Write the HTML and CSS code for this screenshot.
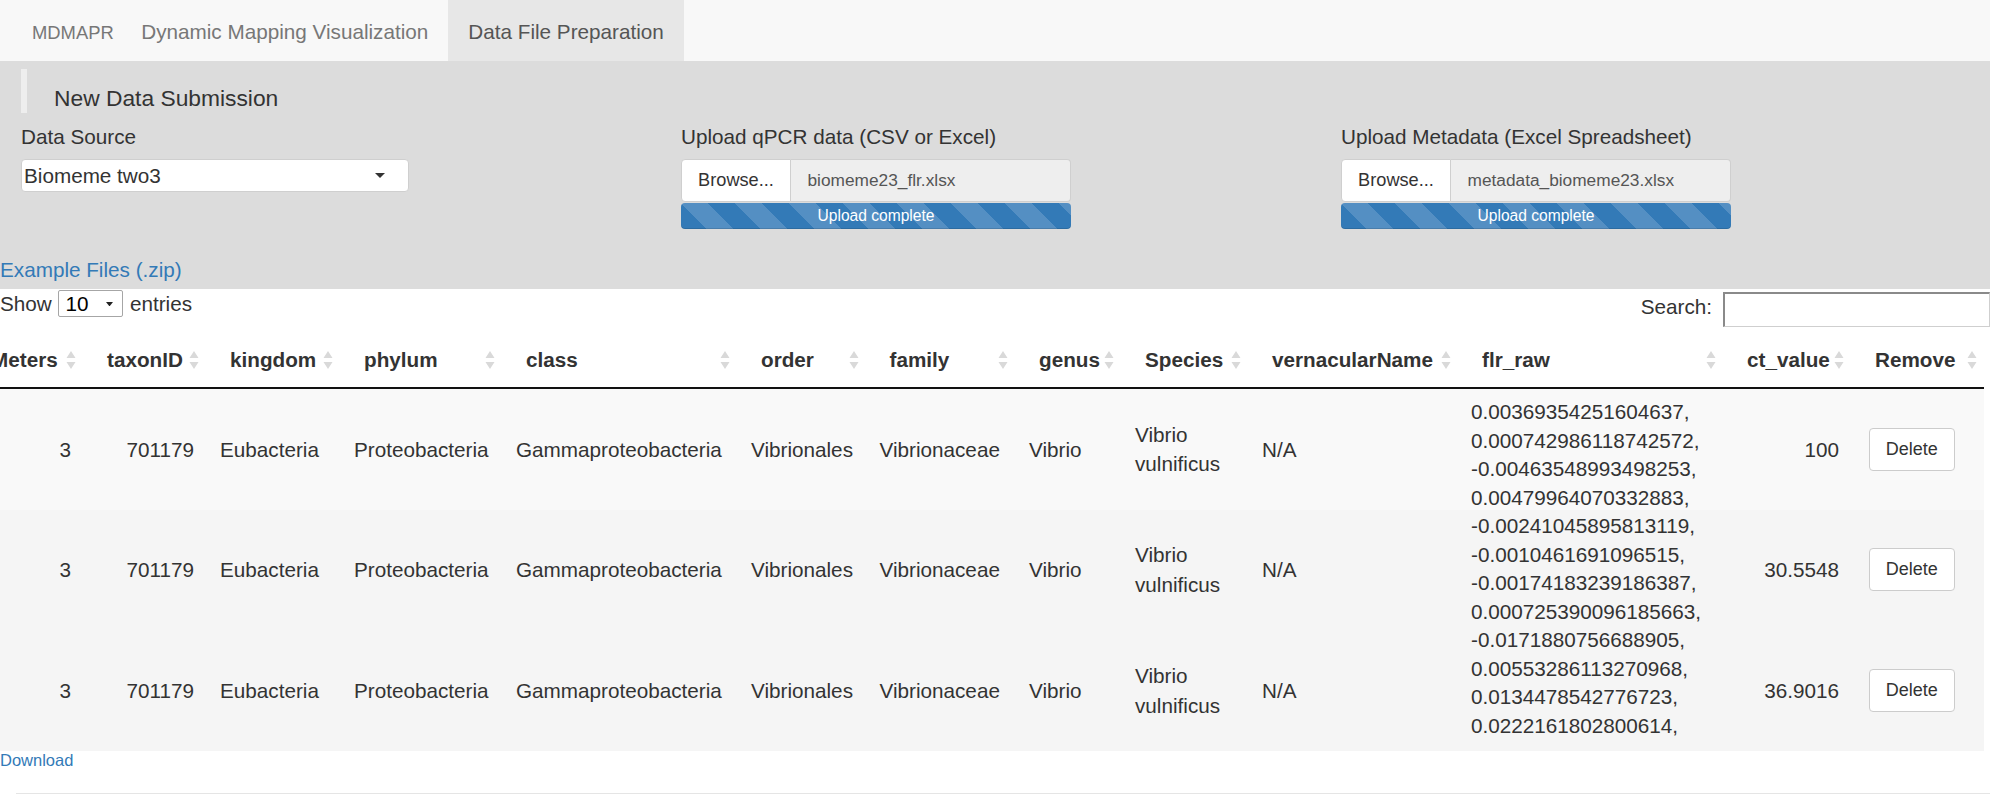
FILE: index.html
```html
<!DOCTYPE html>
<html lang="en">
<head>
<meta charset="utf-8">
<title>MDMAPR - Data File Preparation</title>
<link rel="stylesheet" href="styles.css">
</head>
<body>
<nav class="navbar">
  <span class="brand">MDMAPR</span>
  <a class="nav-link" href="#">Dynamic Mapping Visualization</a>
  <a class="nav-link active" href="#">Data File Preparation</a>
</nav>

<section class="panel">
  <blockquote class="panel-title">New Data Submission</blockquote>
  <div class="inputs">
    <div class="field">
      <label>Data Source</label>
      <div class="select"><span>Biomeme two3</span><svg class="caret" viewBox="0 0 10 5"><path d="M0 0H10L5 5Z"/></svg></div>
    </div>
    <div class="field">
      <label>Upload qPCR data (CSV or Excel)</label>
      <div class="file-group"><span class="browse">Browse...</span><span class="file-name">biomeme23_flr.xlsx</span></div>
      <div class="progress">Upload complete</div>
    </div>
    <div class="field">
      <label>Upload Metadata (Excel Spreadsheet)</label>
      <div class="file-group"><span class="browse">Browse...</span><span class="file-name">metadata_biomeme23.xlsx</span></div>
      <div class="progress">Upload complete</div>
    </div>
  </div>
  <a class="example" href="#">Example Files (.zip)</a>
</section>

<div class="dt-toolbar">
  <div class="length">Show <span class="len-select">10<svg class="len-caret" viewBox="0 0 8 5"><path d="M0 0H8L4 5Z"/></svg></span> entries</div>
  <div class="filter"><span class="filter-label">Search:</span><input class="search-input" type="search"></div>
</div>

<div class="table-scroll">
<table class="dt">
  <colgroup>
    <col class="w1"><col class="w2"><col class="w3"><col class="w4"><col class="w5"><col class="w6"><col class="w7"><col class="w8"><col class="w9"><col class="w10"><col class="w11"><col class="w12"><col class="w13">
  </colgroup>
  <thead>
    <tr>
      <th>Meters<svg class="sort" viewBox="0 0 10 18"><path d="M5 0L9.5 7H0.5Z M0.5 11H9.5L5 18Z"/></svg></th>
      <th>taxonID<svg class="sort" viewBox="0 0 10 18"><path d="M5 0L9.5 7H0.5Z M0.5 11H9.5L5 18Z"/></svg></th>
      <th>kingdom<svg class="sort" viewBox="0 0 10 18"><path d="M5 0L9.5 7H0.5Z M0.5 11H9.5L5 18Z"/></svg></th>
      <th>phylum<svg class="sort" viewBox="0 0 10 18"><path d="M5 0L9.5 7H0.5Z M0.5 11H9.5L5 18Z"/></svg></th>
      <th>class<svg class="sort" viewBox="0 0 10 18"><path d="M5 0L9.5 7H0.5Z M0.5 11H9.5L5 18Z"/></svg></th>
      <th>order<svg class="sort" viewBox="0 0 10 18"><path d="M5 0L9.5 7H0.5Z M0.5 11H9.5L5 18Z"/></svg></th>
      <th>family<svg class="sort" viewBox="0 0 10 18"><path d="M5 0L9.5 7H0.5Z M0.5 11H9.5L5 18Z"/></svg></th>
      <th>genus<svg class="sort" viewBox="0 0 10 18"><path d="M5 0L9.5 7H0.5Z M0.5 11H9.5L5 18Z"/></svg></th>
      <th>Species<svg class="sort" viewBox="0 0 10 18"><path d="M5 0L9.5 7H0.5Z M0.5 11H9.5L5 18Z"/></svg></th>
      <th>vernacularName<svg class="sort" viewBox="0 0 10 18"><path d="M5 0L9.5 7H0.5Z M0.5 11H9.5L5 18Z"/></svg></th>
      <th>flr_raw<svg class="sort" viewBox="0 0 10 18"><path d="M5 0L9.5 7H0.5Z M0.5 11H9.5L5 18Z"/></svg></th>
      <th>ct_value<svg class="sort" viewBox="0 0 10 18"><path d="M5 0L9.5 7H0.5Z M0.5 11H9.5L5 18Z"/></svg></th>
      <th>Remove<svg class="sort" viewBox="0 0 10 18"><path d="M5 0L9.5 7H0.5Z M0.5 11H9.5L5 18Z"/></svg></th>
    </tr>
  </thead>
  <tbody>
    <tr class="r1">
      <td class="num">3</td>
      <td class="num">701179</td>
      <td>Eubacteria</td>
      <td>Proteobacteria</td>
      <td>Gammaproteobacteria</td>
      <td>Vibrionales</td>
      <td>Vibrionaceae</td>
      <td>Vibrio</td>
      <td>Vibrio vulnificus</td>
      <td>N/A</td>
      <td class="flr"><div class="flr-box">0.00369354251604637,<br>0.000742986118742572,<br>-0.00463548993498253,<br>0.00479964070332883,</div></td>
      <td class="num">100</td>
      <td class="rm"><span class="btn-del">Delete</span></td>
    </tr>
    <tr class="r2">
      <td class="num">3</td>
      <td class="num">701179</td>
      <td>Eubacteria</td>
      <td>Proteobacteria</td>
      <td>Gammaproteobacteria</td>
      <td>Vibrionales</td>
      <td>Vibrionaceae</td>
      <td>Vibrio</td>
      <td>Vibrio vulnificus</td>
      <td>N/A</td>
      <td class="flr"><div class="flr-box">-0.00241045895813119,<br>-0.0010461691096515,<br>-0.00174183239186387,<br>0.000725390096185663,</div></td>
      <td class="num">30.5548</td>
      <td class="rm"><span class="btn-del">Delete</span></td>
    </tr>
    <tr class="r3">
      <td class="num">3</td>
      <td class="num">701179</td>
      <td>Eubacteria</td>
      <td>Proteobacteria</td>
      <td>Gammaproteobacteria</td>
      <td>Vibrionales</td>
      <td>Vibrionaceae</td>
      <td>Vibrio</td>
      <td>Vibrio vulnificus</td>
      <td>N/A</td>
      <td class="flr"><div class="flr-box">-0.0171880756688905,<br>0.00553286113270968,<br>0.0134478542776723,<br>0.0222161802800614,</div></td>
      <td class="num">36.9016</td>
      <td class="rm"><span class="btn-del">Delete</span></td>
    </tr>
  </tbody>
</table>
</div>

<a class="download" href="#">Download</a>
<hr class="rule">
</body>
</html>
```

FILE: styles.css
```css
* { box-sizing: border-box; }

html, body {
  margin: 0;
  padding: 0;
}

body {
  font-family: "Liberation Sans", Arial, Helvetica, sans-serif;
  font-size: 20.7px;
  line-height: 29.6px;
  color: #333;
  background: #fff;
  width: 1990px;
  height: 794px;
  overflow: hidden;
}

a {
  color: #337ab7;
  text-decoration: none;
}

/* ---------- navbar ---------- */
.navbar {
  display: flex;
  height: 61px;
  background: #f8f8f8;
  padding-left: 32px;
}

.brand {
  font-size: 18.4px;
  line-height: 30px;
  padding-top: 18px;
  margin-right: 7.5px;
  color: #777;
}

.nav-link {
  color: #777;
  line-height: 30px;
  padding: 17px 20px 0;
}

.nav-link.active {
  background: #e7e7e7;
  color: #555;
}

/* ---------- gray input panel ---------- */
.panel {
  background: #dcdcdc;
  padding: 8px 0 4.4px;
}

.panel-title {
  margin: 0 0 0 21px;
  height: 44px;
  border-left: 6px solid #eeeeee;
  padding: 17px 0 0 27px;
  font-size: 22.8px;
  line-height: 25px;
}

.inputs {
  display: grid;
  grid-template-columns: 660px 660px 660px;
  padding-left: 21px;
  margin-top: 9px;
}

.field label {
  display: block;
  line-height: 29.6px;
  margin-bottom: 7.4px;
}

.select {
  width: 388px;
  height: 33px;
  display: flex;
  align-items: center;
  justify-content: space-between;
  padding: 0 23px 0 2px;
  background: #fff;
  border: 1px solid #cfcfcf;
  border-radius: 4px;
  color: #333;
}

.caret {
  width: 10px;
  height: 5px;
  fill: #333;
}

.file-group {
  display: flex;
  width: 390px;
  height: 43px;
}

.browse {
  width: 110px;
  display: flex;
  align-items: center;
  justify-content: center;
  background: #fff;
  border: 1px solid #cfcfcf;
  border-radius: 4px 0 0 4px;
  font-size: 18.2px;
  color: #333;
}

.file-name {
  flex: 1;
  display: flex;
  align-items: center;
  padding-left: 16.5px;
  background: #eeeeee;
  border: 1px solid #cfcfcf;
  border-left: 0;
  border-radius: 0 4px 4px 0;
  font-size: 17.3px;
  color: #555;
}

.progress {
  width: 390px;
  height: 26px;
  margin-top: 1px;
  border-radius: 4px;
  background-color: #337ab7;
  background-image: linear-gradient(45deg,
    rgba(255,255,255,.16) 25%, transparent 25%,
    transparent 50%, rgba(255,255,255,.16) 50%,
    rgba(255,255,255,.16) 75%, transparent 75%, transparent);
  background-size: 54px 54px;
  box-shadow: inset 0 -1px 0 rgba(0,0,0,.12);
  color: #fff;
  font-size: 15.6px;
  line-height: 26px;
  text-align: center;
}

.example {
  display: block;
  margin-top: 26px;
  line-height: 29.6px;
}

/* ---------- DataTables toolbar ---------- */
.dt-toolbar {
  display: flex;
  justify-content: space-between;
  align-items: flex-start;
  height: 38px;
}

.length {
  display: flex;
  align-items: center;
  height: 29.6px;
}

.len-select {
  display: inline-flex;
  align-items: center;
  justify-content: space-between;
  width: 65px;
  height: 27px;
  margin: 0 6.5px 0 6.7px;
  padding: 0 9px 0 6px;
  border: 1px solid #a6a6a6;
  border-radius: 2px;
  color: #000;
  background: #fff;
}

.len-caret {
  width: 7px;
  height: 4.5px;
  fill: #222;
}

.filter {
  display: flex;
  align-items: flex-start;
}

.filter-label {
  line-height: 29.6px;
  margin-top: 3px;
}

.search-input {
  display: block;
  width: 267px;
  height: 35px;
  margin: 3px 0 0 11px;
  padding: 0 4px;
  background: #fff;
  border-style: solid;
  border-width: 2px 1px 1px 2px;
  border-color: #8a8a8a #cfcfcf #cfcfcf #8a8a8a;
  font: inherit;
  outline: none;
  -webkit-appearance: none;
  appearance: none;
}

/* ---------- table ---------- */
.table-scroll {
  width: 1990px;
  overflow: hidden;
  margin-top: 6.4px;
}

.dt {
  table-layout: fixed;
  width: 2017px;
  margin-left: -33px;
  border-collapse: separate;
  border-spacing: 0;
}

.w1 { width: 116px; }
.w2 { width: 123px; }
.w3 { width: 134px; }
.w4 { width: 162px; }
.w5 { width: 235px; }
.w6 { width: 128.5px; }
.w7 { width: 149.5px; }
.w8 { width: 106px; }
.w9 { width: 127px; }
.w10 { width: 210px; }
.w11 { width: 265px; }
.w12 { width: 128px; }
.w13 { width: 133px; }

.dt th {
  position: relative;
  text-align: left;
  font-weight: bold;
  white-space: nowrap;
  padding: 12px 20px 12px 24px;
  line-height: 29.6px;
  border-bottom: 2px solid #111;
  color: #333;
}

.sort {
  position: absolute;
  right: 7px;
  top: 50%;
  width: 10px;
  height: 18px;
  margin-top: -9px;
  fill: #d9d9d9;
}

.dt tbody tr {
  height: 120.7px;
}

.dt td {
  padding: 0 12px 0 14px;
  vertical-align: middle;
  line-height: 29.6px;
}

.r1 td { background: #f9f9f9; }
.r2 td { background: #f5f5f5; }
.r3 td { background: #f5f5f5; }

.dt td.num {
  text-align: right;
}

.dt td.flr {
  vertical-align: top;
  padding: 0 12px 0 13px;
}

.flr-box {
  height: 100px;
  line-height: 28.5px;
  white-space: nowrap;
}

.r1 .flr-box { margin-top: 9.4px; }
.r2 .flr-box { margin-top: 2.7px; }
.r3 .flr-box { margin-top: -3.9px; }

.dt td.rm {
  padding-left: 17.7px;
}

.btn-del {
  display: inline-block;
  width: 86px;
  height: 43px;
  line-height: 41px;
  text-align: center;
  background: #fff;
  border: 1px solid #cccccc;
  border-radius: 4px;
  font-size: 18px;
  color: #333;
}

/* ---------- footer ---------- */
.download {
  display: block;
  font-size: 16.5px;
  line-height: 18px;
}

.rule {
  margin: 24px 0 0 16px;
  border: 0;
  border-top: 1px solid #e5e5e5;
  height: 0;
}
```
